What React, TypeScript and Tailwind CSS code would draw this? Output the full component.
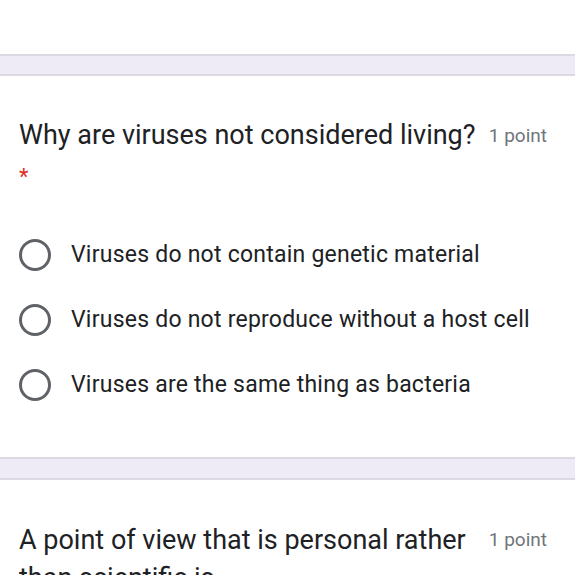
export default function App() {
  const options = [
    'Viruses do not contain genetic material',
    'Viruses do not reproduce without a host cell',
    'Viruses are the same thing as bacteria',
  ]
  return (
    <div className="w-[575px] h-[575px] overflow-hidden bg-white text-[#202124]" style={{ fontFamily: 'Roboto, "Noto Sans", sans-serif' }}>
      <div className="h-[54px]" />
      <div className="h-[22px] bg-[#eeebf7] border-y-2 border-[#dcd9e3]" />
      <div className="pt-[42px] pl-[19px] pr-[28px]">
        <div className="flex items-start justify-between">
          <div className="text-[27px] leading-[34px]">Why are viruses not considered living?</div>
          <div className="text-[19px] leading-[36px] text-[#70757a] shrink-0 pl-2">1 point</div>
        </div>
        <div className="text-[22px] leading-[22px] text-[#d93025] mt-[12px]">*</div>
        <div className="mt-[52px] flex flex-col gap-[35px]">
          {options.map(o => (
            <div key={o} className="flex items-center gap-[20px] h-[30px]">
              <div className="w-[32px] h-[32px] rounded-full border-[3px] border-[#5f6368] shrink-0" />
              <div className="text-[23px] leading-[30px] tracking-[0.01em] whitespace-nowrap">{o}</div>
            </div>
          ))}
        </div>
      </div>
      <div className="h-[57px]" />
      <div className="h-[23px] bg-[#eeebf7] border-y-2 border-[#dcd9e3]" />
      <div className="pt-[41px] pl-[19px] pr-[28px]">
        <div className="flex items-start justify-between">
          <div className="text-[27px] leading-[38px] w-[450px]">A point of view that is personal rather than scientific is</div>
          <div className="text-[19px] leading-[38px] text-[#70757a] shrink-0">1 point</div>
        </div>
      </div>
    </div>
  )
}
